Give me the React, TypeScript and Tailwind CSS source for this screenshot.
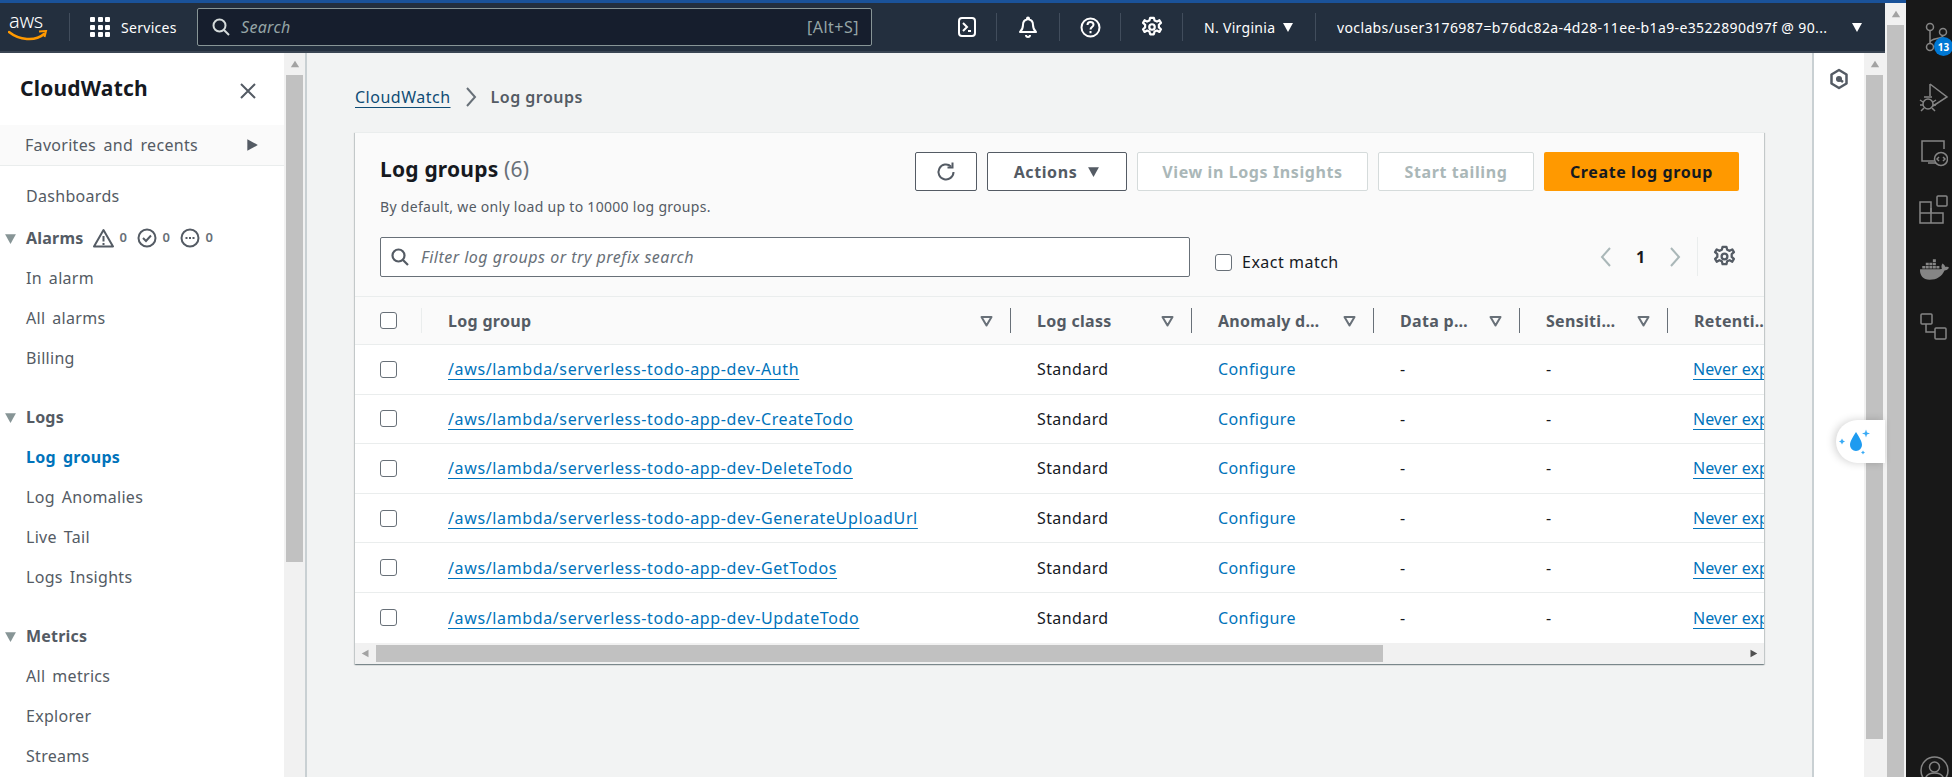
import React from "react";
import { FaDocker } from "react-icons/fa";

const rows = ["Auth", "CreateTodo", "DeleteTodo", "GenerateUploadUrl", "GetTodos", "UpdateTodo"];
const gridCols = "grid grid-cols-[67px_589px_181px_182px_146px_148px_96px]";

function Sort() {
  return (
    <svg width="13" height="12" viewBox="0 0 13 12" className="shrink-0">
      <path d="M1.5 2h10L6.500 10.500z" fill="none" stroke="#687078" strokeWidth="2" strokeLinejoin="round" />
    </svg>
  );
}

function Check({ className = "" }: { className?: string }) {
  return <div className={"w-[17px] h-[17px] rounded-[3px] bg-white border border-[#687078] shrink-0 " + className} />;
}

function Tri({ dir, color, size = 12 }: { dir: "down" | "right" | "left" | "up"; color: string; size?: number }) {
  const d = { down: "M1 2h10L6 11z", right: "M2 1l9 5-9 5z", left: "M10 1L1 6l9 5z", up: "M1 10h10L6 2z" }[dir];
  return (
    <svg width={size} height={size} viewBox="0 0 12 12" className="shrink-0">
      <path d={d} fill={color} />
    </svg>
  );
}

function VBar({ thumbH }: { thumbH: string }) {
  return (
    <div className="w-[21px] shrink-0 bg-[#f1f1f1] flex flex-col items-center">
      <div className="h-[22px] w-full flex items-center justify-center">
        <Tri dir="up" color="#a3a3a3" size={10} />
      </div>
      <div className={"w-[17px] bg-[#c1c1c1] " + thumbH} />
    </div>
  );
}

function Gear({ size = 20, color = "#fff" }: { size?: number; color?: string }) {
  return (
    <svg width={size} height={size} viewBox="0 0 24 24" fill="none" stroke={color} strokeWidth="2.400" strokeLinejoin="round">
      <path d="M10 2h4l.8 3 2.600 1.100 2.700-1.500 1.700 2.900-2.300 2.100v2.800l2.300 2.100-1.700 2.900-2.700-1.500-2.600 1.100-.8 3h-4l-.8-3-2.600-1.100-2.700 1.500-1.700-2.900 2.300-2.100V9.600L2.200 7.500l1.700-2.900 2.700 1.500L9.200 5z" />
      <circle cx="12" cy="12" r="3" />
    </svg>
  );
}

function NavDivider({ h = "h-[28px]" }: { h?: string }) {
  return <div className={"w-px bg-[#414d5c] shrink-0 " + h} />;
}

function TopNav() {
  return (
    <div className="h-[50px] shrink-0 bg-[#232f3e] border-b-2 border-[#3a4553] flex items-center text-white text-[14px] whitespace-nowrap tracking-[0.3px]">
      <div className="w-[69px] shrink-0 pl-[8px] flex flex-col items-start">
        <span className="text-[20px] leading-[17px] font-light tracking-[-0.3px] text-white pl-[1px]">aws</span>
        <svg width="40" height="12" viewBox="0 0 40 12" className="mt-[1px]">
          <path d="M1 2c10 8 26 10 35 2" fill="none" stroke="#f90" strokeWidth="2.500" strokeLinecap="round" />
          <path d="M31 1.500l7-.5-1.500 6" fill="none" stroke="#f90" strokeWidth="2" />
        </svg>
      </div>
      <NavDivider />
      <div className="w-[20px] shrink-0 ml-[20px] grid grid-cols-3 gap-[2.500px]">
        {Array.from({ length: 9 }).map((_, i) => (
          <div key={i} className="h-[5px] bg-white rounded-[1px]" />
        ))}
      </div>
      <span className="ml-[11px] w-[57px] shrink-0 text-[14px]">Services</span>
      <div className="ml-[19px] w-[675px] h-[38px] shrink-0 bg-[#161e2d] border border-[#879596] rounded-[2px] flex items-center pl-[14px] pr-[12px]">
        <svg width="18" height="18" viewBox="0 0 18 18" fill="none" stroke="#d5dbdb" strokeWidth="2">
          <circle cx="7.500" cy="7.500" r="6" />
          <path d="M12 12l5 5" />
        </svg>
        <span className="ml-[11px] italic text-[#95a5a6] text-[16px]">Search</span>
        <span className="ml-auto text-[#95a5a6] text-[16px] tracking-[0.5px]">[Alt+S]</span>
      </div>
      <div className="ml-[85px] w-[39px] shrink-0 flex">
        <svg width="20" height="20" viewBox="0 0 20 20" fill="none" stroke="#fff" strokeWidth="2">
          <rect x="2" y="1" width="16" height="18" rx="3" />
          <path d="M6 6l4 4-4 4M11 14h3" />
        </svg>
      </div>
      <NavDivider />
      <div className="w-[62px] shrink-0 flex justify-center">
        <svg width="22" height="22" viewBox="0 0 22 22" fill="none" stroke="#fff" strokeWidth="2" strokeLinejoin="round">
          <path d="M11 1.500a1 1 0 011 1v1c3 .6 4 3 4 5.500 0 4 1.500 5.500 3 7H3c1.500-1.500 3-3 3-7 0-2.500 1-4.900 4-5.500v-1a1 1 0 011-1zM9 19a2 2 0 004 0" />
        </svg>
      </div>
      <NavDivider />
      <div className="w-[60px] shrink-0 flex justify-center">
        <svg width="21" height="21" viewBox="0 0 21 21" fill="none" stroke="#fff" strokeWidth="2">
          <circle cx="10.500" cy="10.500" r="9" />
          <path d="M7.500 8c0-1.800 1.300-3 3-3s3 1.200 3 2.800c0 2.200-3 2.400-3 4.700M10.500 14v2.200" />
        </svg>
      </div>
      <NavDivider />
      <div className="w-[61px] shrink-0 flex justify-center">
        <Gear size={22} />
      </div>
      <NavDivider />
      <span className="ml-[21px] w-[72px] shrink-0">N. Virginia</span>
      <span className="ml-[6px] shrink-0"><Tri dir="down" color="#fff" size={12} /></span>
      <div className="ml-[21px]"><NavDivider /></div>
      <span className="ml-[21px] w-[509px] shrink-0 tracking-[0.37px]">voclabs/user3176987=b76dc82a-4d28-11ee-b1a9-e3522890d97f @ 90...</span>
      <span className="ml-[5px] shrink-0"><Tri dir="down" color="#fff" size={12} /></span>
    </div>
  );
}

function NavItem({ label, active }: { label: string; active?: boolean }) {
  return (
    <div className={"h-[40px] flex items-center pl-[26px] text-[16px] tracking-[0.3px] [word-spacing:2.500px] " + (active ? "font-bold text-[#0073bb]" : "text-[#545b64]")}>
      {label}
    </div>
  );
}

function Group({ label, children }: { label: string; children?: React.ReactNode }) {
  return (
    <div className="h-[40px] flex items-center text-[16px] font-bold text-[#545b64] tracking-[0.2px]">
      <div className="w-[26px] shrink-0 pl-[4px]">
        <Tri dir="down" color="#879596" size={13} />
      </div>
      {label}
      {children}
    </div>
  );
}

function Sidebar() {
  const c = "#545b64";
  return (
    <div className="w-[284px] shrink-0 bg-white flex flex-col overflow-hidden">
      <div className="h-[72px] shrink-0 flex items-center justify-between pl-[20px] pr-[27px] pt-[1px]">
        <span className="text-[21px] tracking-[0.2px] font-bold text-[#16191f] leading-none mt-[-3px]">CloudWatch</span>
        <svg width="18" height="18" viewBox="0 0 18 18" fill="none" stroke="#545b64" strokeWidth="2" className="mt-[2px]">
          <path d="M2 2l14 14M16 2L2 16" />
        </svg>
      </div>
      <div className="h-[41px] shrink-0 bg-[#fafafa] border-b border-[#eaeded] flex items-center pl-[25px] pr-[25px] justify-between text-[16px] text-[#545b64] tracking-[0.3px] [word-spacing:3px]">
        <span>Favorites and recents</span>
        <Tri dir="right" color="#545b64" size={14} />
      </div>
      <div className="h-[10px] shrink-0" />
      <NavItem label="Dashboards" />
      <div className="h-[2px] shrink-0" />
      <Group label="Alarms">
        <span className="ml-[10px] flex items-center text-[13px] font-semibold text-[#687078]">
          <svg width="21" height="20" viewBox="0 0 21 20" fill="none" stroke={c} strokeWidth="2" strokeLinejoin="round">
            <path d="M10.500 2L20 18.500H1z" />
            <path d="M10.500 8v5.500M10.500 15v2" />
          </svg>
          <span className="ml-[5px] w-[18px]">0</span>
          <svg width="20" height="20" viewBox="0 0 20 20" fill="none" stroke={c} strokeWidth="2">
            <circle cx="10" cy="10" r="8.500" />
            <path d="M6 10l3 3 5-5.500" />
          </svg>
          <span className="ml-[5px] w-[18px]">0</span>
          <svg width="20" height="20" viewBox="0 0 20 20" fill="none" stroke={c} strokeWidth="2">
            <circle cx="10" cy="10" r="8.500" />
            <path d="M5.500 10h2M9 10h2M12.500 10h2" />
          </svg>
          <span className="ml-[5px]">0</span>
        </span>
      </Group>
      <NavItem label="In alarm" />
      <NavItem label="All alarms" />
      <NavItem label="Billing" />
      <div className="h-[19px] shrink-0" />
      <Group label="Logs" />
      <NavItem label="Log groups" active />
      <NavItem label="Log Anomalies" />
      <NavItem label="Live Tail" />
      <NavItem label="Logs Insights" />
      <div className="h-[19px] shrink-0" />
      <Group label="Metrics" />
      <NavItem label="All metrics" />
      <NavItem label="Explorer" />
      <NavItem label="Streams" />
    </div>
  );
}

function Btn({ children, className = "" }: { children: React.ReactNode; className?: string }) {
  return (
    <div className={"h-[39px] rounded-[2px] flex items-center justify-center text-[16px] font-bold shrink-0 tracking-[0.6px] " + className}>
      {children}
    </div>
  );
}

function Card() {
  const head = "h-[25px] border-r border-[#687078] flex items-center justify-between pl-[26px] pr-[17px]";
  return (
    <div className="w-[1409px] mt-[22px] bg-white border-t border-[#eaeded] overflow-hidden shadow-[0_1px_1px_0_rgba(0,28,36,0.3),1px_1px_1px_0_rgba(0,28,36,0.15),-1px_1px_1px_0_rgba(0,28,36,0.15)]">
      <div className="bg-[#fafafa] h-[164px] border-b border-[#eaeded] pl-[25px] pr-[25px] pt-[19px]">
        <div className="flex">
          <div className="flex-1 min-w-0">
            <div className="text-[21px] tracking-[0.2px] leading-[35px] font-bold text-[#16191f]">
              Log groups <span className="font-normal text-[#687078]">(6)</span>
            </div>
            <div className="text-[14px] leading-[20px] mt-[10px] text-[#545b64] tracking-[0.3px]">By default, we only load up to 10000 log groups.</div>
          </div>
          <div className="flex gap-[10px]">
            <Btn className="w-[62px] border border-[#545b64] bg-white">
              <svg width="22" height="22" viewBox="0 0 22 22" fill="none" stroke="#545b64" strokeWidth="2">
                <path d="M18.500 11a7.500 7.500 0 11-2.500-5.600" />
                <path d="M17.500 1.500v5h-5" />
              </svg>
            </Btn>
            <Btn className="w-[140px] border border-[#545b64] bg-white text-[#545b64] gap-[10px]">
              Actions <Tri dir="down" color="#545b64" size={13} />
            </Btn>
            <Btn className="w-[231px] border border-[#d5dbdb] bg-white text-[#aab7b8]">View in Logs Insights</Btn>
            <Btn className="w-[156px] border border-[#d5dbdb] bg-white text-[#aab7b8]">Start tailing</Btn>
            <Btn className="w-[195px] bg-[#ff9900] text-[#16191f]">Create log group</Btn>
          </div>
        </div>
        <div className="flex items-start mt-[20px]">
          <div className="w-[810px] h-[40px] shrink-0 bg-white border border-[#687078] rounded-[2px] flex items-center pl-[10px] text-[16px] italic text-[#687078] tracking-[0.5px]">
            <svg width="18" height="18" viewBox="0 0 18 18" fill="none" stroke="#545b64" strokeWidth="2.200">
              <circle cx="7.500" cy="7.500" r="6" />
              <path d="M12 12l5 5" />
            </svg>
            <span className="ml-[12px]">Filter log groups or try prefix search</span>
          </div>
          <div className="ml-[25px] mt-[14px] flex items-center text-[16px] text-[#16191f] h-[22px] tracking-[0.5px]">
            <Check />
            <span className="ml-[10px]">Exact match</span>
          </div>
          <div className="ml-auto flex items-center h-[39px] text-[16px] font-bold text-[#16191f]">
            <svg width="14" height="22" viewBox="0 0 14 22" fill="none" stroke="#aab7b8" strokeWidth="2"><path d="M11 2L3 11l8 9" /></svg>
            <span className="w-[55px] text-center">1</span>
            <svg width="14" height="22" viewBox="0 0 14 22" fill="none" stroke="#aab7b8" strokeWidth="2"><path d="M3 2l8 9-8 9" /></svg>
            <div className="ml-[15px] w-px h-[39px] bg-[#eaeded]" />
            <div className="ml-[15px] mr-[3px]"><Gear size={23} color="#545b64" /></div>
          </div>
        </div>
      </div>
      <div className={gridCols + " h-[48px] bg-[#fafafa] border-b border-[#eaeded] items-center text-[16px] font-bold text-[#545b64] whitespace-nowrap tracking-[0.3px]"}>
        <div className="h-[25px] border-r border-[#eaeded] flex items-center pl-[25px]"><Check /></div>
        <div className={head}>Log group<Sort /></div>
        <div className={head}>Log class<Sort /></div>
        <div className={head}>Anomaly d…<Sort /></div>
        <div className={head}>Data p…<Sort /></div>
        <div className={head}>Sensiti…<Sort /></div>
        <div className="h-[25px] flex items-center pl-[26px] overflow-hidden">Retenti…</div>
      </div>
      {rows.map((r, i) => (
        <div key={r} className={gridCols + " h-[49.600px] bg-white items-center text-[16px] text-[#16191f] whitespace-nowrap tracking-[0.4px] " + (i < 5 ? "border-b border-[#eaeded]" : "")}>
          <div className="pl-[25px]"><Check /></div>
          <div className="pl-[26px]">
            <span className="text-[#0073bb] underline underline-offset-[4px] tracking-[0.63px]">/aws/lambda/serverless-todo-app-dev-{r}</span>
          </div>
          <div className="pl-[26px]">Standard</div>
          <div className="pl-[26px] text-[#0073bb]">Configure</div>
          <div className="pl-[26px]">-</div>
          <div className="pl-[26px]">-</div>
          <div className="pl-[25px] overflow-hidden">
            <span className="text-[#0073bb] underline underline-offset-[4px] tracking-[0px]">Never expire</span>
          </div>
        </div>
      ))}
      <div className="h-[21px] bg-[#f1f1f1] flex items-center">
        <div className="w-[21px] shrink-0 flex justify-center"><Tri dir="left" color="#a3a3a3" size={9} /></div>
        <div className="w-[1007px] h-[17px] bg-[#c1c1c1]" />
        <div className="ml-auto w-[21px] shrink-0 flex justify-center"><Tri dir="right" color="#505050" size={9} /></div>
      </div>
    </div>
  );
}

function VsRail() {
  const c = "#858585";
  return (
    <div className="w-[46px] shrink-0 bg-[#181818] flex flex-col items-center relative overflow-hidden pl-[10px]">
      <div className="mt-[22px] relative h-[34px] w-[28px] pl-[4px]">
        <svg width="24" height="32" viewBox="0 0 24 32" fill="none" stroke={c} strokeWidth="1.500">
          <circle cx="6" cy="5" r="3.500" />
          <circle cx="6" cy="25" r="3.500" />
          <circle cx="19" cy="10" r="3.500" />
          <path d="M6 8.500v13M19 13.500c0 4-13 2-13 7" />
        </svg>
        <div className="absolute left-[14px] top-[15px] w-[19px] h-[19px] rounded-full bg-[#0078d4] text-white text-[10px] font-bold leading-none flex items-center justify-center">13</div>
      </div>
      <svg width="30" height="32" viewBox="0 0 30 32" fill="none" stroke={c} strokeWidth="1.500" className="mt-[26px]">
        <path d="M11 2l17 13-14 9M11 2v12" />
        <circle cx="9" cy="22" r="5" />
        <path d="M1 18l3 2M1 23h3M2 29l3-3M17 18l-3 2M17 23h-3M16 29l-3-3M5 15l8 0" />
      </svg>
      <svg width="28" height="28" viewBox="0 0 28 28" fill="none" stroke={c} strokeWidth="1.500" className="mt-[25px]">
        <path d="M24 10V2H2v20h12M8 24h8" />
        <circle cx="21" cy="20" r="6.500" />
        <path d="M19 18l-2 2 2 2M23 18l2 2-2 2" />
      </svg>
      <svg width="30" height="30" viewBox="0 0 30 30" fill="none" stroke={c} strokeWidth="1.500" className="mt-[28px]">
        <rect x="18" y="1" width="10" height="10" rx="1" />
        <path d="M1 7h11v21H1zM1 18h23v10H12" />
        <path d="M12 18v-5" />
      </svg>
      <div className="mt-[30px] text-[#858585] text-[29px] leading-none"><FaDocker /></div>
      <svg width="28" height="28" viewBox="0 0 28 28" fill="none" stroke={c} strokeWidth="1.500" className="mt-[29px]">
        <rect x="1" y="1" width="11" height="10" rx="1" />
        <rect x="15" y="15" width="11" height="11" rx="1" />
        <path d="M6 11v8h9" />
      </svg>
      <svg width="29" height="29" viewBox="0 0 29 29" fill="none" stroke={c} strokeWidth="1.500" className="mt-auto mb-[-8px]">
        <circle cx="14.500" cy="14.500" r="13.500" />
        <circle cx="14.500" cy="11" r="5" />
        <path d="M5 24c1-6 5-7 9.500-7s8.500 1 9.500 7" />
      </svg>
    </div>
  );
}

export default function App() {
  return (
    <div className="w-[1952px] h-[777px] overflow-hidden flex bg-white text-[#16191f] font-['Noto_Sans',sans-serif]">
      <div className="w-[1906px] shrink-0 flex flex-col">
        <div className="h-[3px] bg-[#1a5299] shrink-0" />
        <div className="flex-1 flex min-h-0">
          <div className="w-[1885px] shrink-0 flex flex-col min-h-0">
            <TopNav />
            <div className="flex-1 flex min-h-0 relative">
              <Sidebar />
              <VBar thumbH="h-[487px]" />
              <div className="w-[1509px] shrink-0 bg-[#f2f3f3] border-l-2 border-r-2 border-[#c9d0d3] pl-[48px] pt-[30px]">
                <div className="flex items-center h-[27px] text-[16px] leading-none tracking-[0.5px]">
                  <span className="text-[#0f4c75] underline underline-offset-[4px]">CloudWatch</span>
                  <svg width="12" height="22" viewBox="0 0 12 22" fill="none" stroke="#687078" strokeWidth="2" className="ml-[14px]"><path d="M2 2l8 9-8 9" /></svg>
                  <span className="ml-[14px] font-semibold text-[#545b64]">Log groups</span>
                </div>
                <Card />
              </div>
              <div className="flex-1 bg-white flex justify-center">
                <div className="h-[52px] flex items-center">
                  <svg width="20" height="22" viewBox="0 0 20 22" fill="none" stroke="#545b64" strokeWidth="2.500" strokeLinejoin="round">
                    <path d="M10 2l7.500 4.500v9L10 20l-7.500-4.500v-9z" />
                    <circle cx="10" cy="11" r="1.800" fill="#545b64" />
                    <path d="M10 11l4 3" />
                  </svg>
                </div>
              </div>
              <VBar thumbH="h-[664px]" />
              <div className="absolute right-0 top-[367px] w-[49px] h-[43px] bg-white rounded-l-[22px] shadow-[-2px_0_8px_rgba(0,0,0,0.18)] flex items-center pl-[3px]">
                <svg width="32" height="30" viewBox="0 0 32 30">
                  <path d="M17 5c3 5 6 9 6 13a6 6 0 01-12 0c0-4 3-8 6-13z" fill="#1e9bf0" />
                  <path d="M3 11.500l1 2 2 1-2 1-1 2-1-2-2-1 2-1zM27 2.500l1 3 3 1-3 1-1 3-1-3-3-1 3-1zM24 23.500l.7 1.300 1.300.7-1.300.7-.7 1.300-.7-1.300-1.300-.7 1.300-.7z" fill="#38aaf5" />
                </svg>
              </div>
            </div>
          </div>
          <VBar thumbH="h-[752px]" />
        </div>
      </div>
      <VsRail />
    </div>
  );
}
